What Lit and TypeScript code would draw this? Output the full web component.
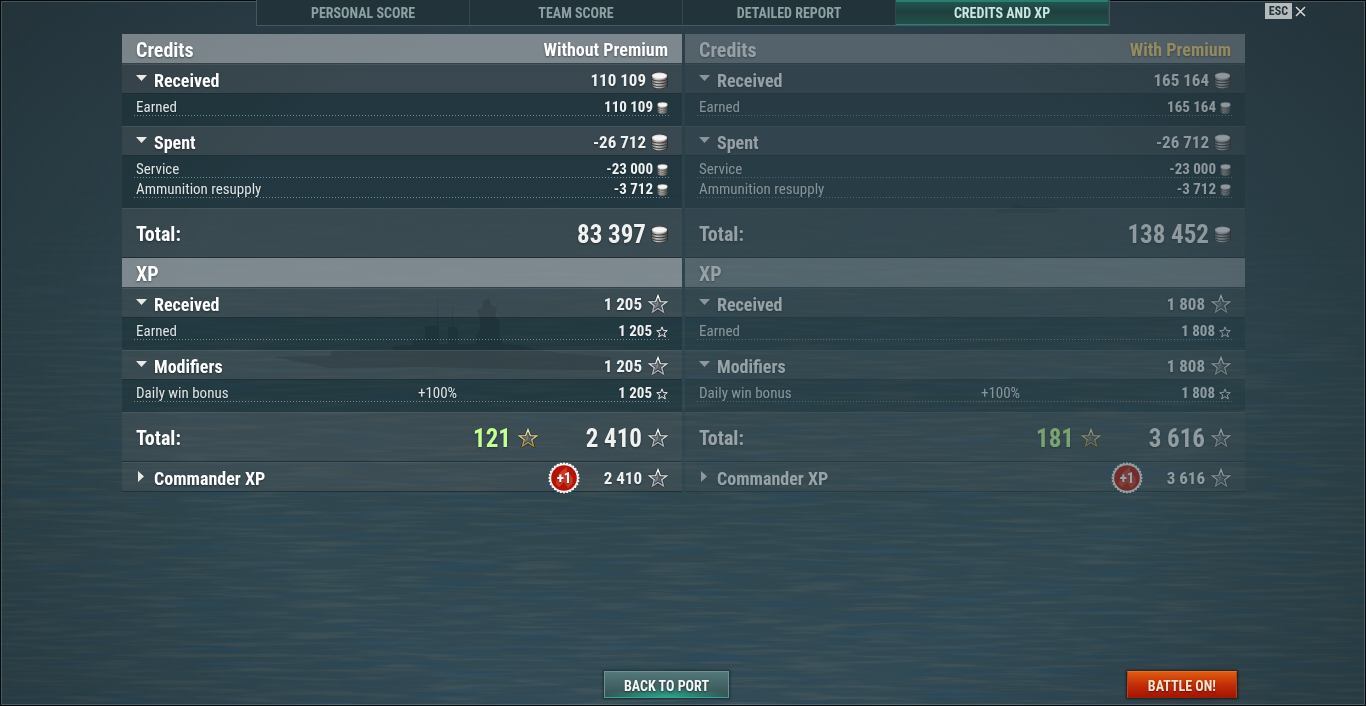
import { LitElement, html, css, svg, nothing } from "lit";
import { customElement, property, state } from "lit/decorators.js";

type Unit = "coin" | "star";

interface Line {
  label: string;
  value: string;
  rate?: string;
}

interface Section {
  label: string;
  value: string;
  lines: Line[];
  badge?: string;
}

interface Block {
  title: string;
  note?: string;
  unit: Unit;
  sections: Section[];
  total: string;
  bonus?: string;
  after?: Section;
}

const report = (
  note: string,
  c: string[],
  x: string[],
): Block[] => [
  {
    title: "Credits",
    note,
    unit: "coin",
    sections: [
      { label: "Received", value: c[0], lines: [{ label: "Earned", value: c[0] }] },
      {
        label: "Spent",
        value: "-26 712",
        lines: [
          { label: "Service", value: "-23 000" },
          { label: "Ammunition resupply", value: "-3 712" },
        ],
      },
    ],
    total: c[1],
  },
  {
    title: "XP",
    unit: "star",
    sections: [
      { label: "Received", value: x[0], lines: [{ label: "Earned", value: x[0] }] },
      {
        label: "Modifiers",
        value: x[0],
        lines: [{ label: "Daily win bonus", value: x[0], rate: "+100%" }],
      },
    ],
    total: x[1],
    bonus: x[2],
    after: { label: "Commander XP", value: x[1], lines: [], badge: "+1" },
  },
];

const STAR = "M10 1.5 12.3 7.6 18.8 7.8 13.7 11.8 15.6 18.2 10 14.5 4.4 18.2 6.3 11.8 1.2 7.8 7.7 7.6Z";
const CORE = "M10 5.5 11.4 9.2 15 9.2 12.3 11.3 13.5 15 10 12.9 6.5 15 7.7 11.3 5 9.2 8.6 9.2Z";

@customElement("value-icon")
export class ValueIcon extends LitElement {
  @property() kind: Unit | "gold" = "coin";
  @property({ type: Boolean, reflect: true }) small = false;

  static styles = css`
    :host {
      display: block;
      flex: none;
      line-height: 0;
    }
    .icon {
      display: block;
    }
  `;

  render() {
    if (this.kind === "coin") {
      const w = this.small ? 11 : 17;
      const h = this.small ? 12 : 17;
      return html`<svg class="icon" width=${w} height=${h} viewBox="0 0 17 17" preserveAspectRatio="none" aria-hidden="true">
        <defs>
          <linearGradient id="side">
            <stop offset="0" stop-color="#6c6c6c" />
            <stop offset="0.3" stop-color="#c4c4c2" />
            <stop offset="0.6" stop-color="#a5a3a1" />
            <stop offset="1" stop-color="#505050" />
          </linearGradient>
        </defs>
        <path d="M0 4C0 2 4 0 8.5 0S17 2 17 4V13C17 15.4 13 17 8.5 17S0.4 15.4 0.4 13Z" fill="#252b2d" />
        <path d="M0.8 5V13C0.8 14.9 4.3 16.4 8.5 16.4S16.2 14.9 16.2 13V5Z" fill="url(#side)" />
        <path d="M0.8 7.2C3.2 9.6 13.8 9.6 16.2 7.2M0.8 9.9C3.2 12.3 13.8 12.3 16.2 9.9M0.8 12.6C3.2 15 13.8 15 16.2 12.6" fill="none" stroke="#2a2a2a" stroke-width="0.9" />
        <ellipse cx="8.5" cy="3.8" rx="7.8" ry="3.4" fill="#d6d6d4" />
        <ellipse cx="8.5" cy="3.8" rx="6.4" ry="2.4" fill="#f6f5f3" />
      </svg>`;
    }
    if (this.small) {
      return html`<svg class="icon" width="12" height="12" viewBox="0 0 20 20" aria-hidden="true">
        <path d=${STAR} fill="#26363c" stroke="#f2f4f4" stroke-width="1.6" />
      </svg>`;
    }
    const gold = this.kind === "gold";
    return html`<svg class="icon" width="20" height="20" viewBox="0 0 20 20" aria-hidden="true">
      <defs>
        <linearGradient id="edge" x1="0" y1="0" x2="0" y2="1">
          <stop offset="0" stop-color=${gold ? "#f7ecc0" : "#ffffff"} />
          <stop offset="0.55" stop-color=${gold ? "#d9c27a" : "#d0d2d4"} />
          <stop offset="1" stop-color=${gold ? "#a88530" : "#a4a6a9"} />
        </linearGradient>
      </defs>
      <path d=${STAR} fill="#2b363b" stroke="#1c2629" stroke-width="2.8" opacity="0.7" />
      <path d=${STAR} fill="#303b40" stroke="url(#edge)" stroke-width="1.3" />
      <path d=${CORE} fill="#59646a" />
      <path d="M10 5.5V11L5 9.2H8.6ZM10 11 6.5 15 7.7 11.3Z" fill=${gold ? "#7f7f6a" : "#858d92"} />
    </svg>`;
  }
}

@customElement("result-panel")
export class ResultPanel extends LitElement {
  @property({ attribute: false }) blocks: Block[] = [];
  @property({ type: Boolean, reflect: true }) dimmed = false;
  @state() private closed = new Set<string>();

  static styles = css`
    :host {
      display: block;
      min-width: 0;
      color: #fff;
      text-shadow: 0 1px 2px rgba(10, 20, 24, 0.5);
    }
    :host([dimmed]) {
      opacity: 0.5;
    }
    .sheet {
      display: block;
      width: 100%;
    }
    .group {
      display: block;
    }
    .row {
      display: flex;
      align-items: center;
      box-sizing: border-box;
      padding: 2px 14px 0;
    }
    .label,
    .value,
    .extra,
    .rate {
      padding: 0;
      text-align: left;
      font-weight: inherit;
    }
    .label {
      flex: 1;
    }
    .value,
    .extra {
      display: flex;
      align-items: center;
      justify-content: flex-end;
      color: #f0f2f2;
    }
    .title {
      height: 30px;
      background: rgba(205, 208, 210, 0.5);
      border-bottom: 1px solid #33434a;
      font-size: 20px;
      font-weight: 700;
    }
    .note {
      padding: 0;
      font-size: 18px;
      text-align: right;
    }
    :host([dimmed]) .note {
      color: #ffdb80;
    }
    .section {
      height: 30px;
      background: rgba(100, 100, 100, 0.24);
      border-top: 1px solid rgba(160, 180, 186, 0.12);
      border-bottom: 1px solid rgba(17, 30, 36, 0.6);
      font-size: 18px;
      font-weight: 700;
    }
    .section .value {
      font-size: 17px;
    }
    .toggle {
      display: flex;
      align-items: center;
      gap: 7px;
      padding: 0;
      border: 0;
      background: none;
      color: inherit;
      font: inherit;
      text-shadow: inherit;
      cursor: pointer;
    }
    .arrow {
      width: 11px;
      height: 12px;
      margin-bottom: 4px;
    }
    .coin {
      gap: 5px;
    }
    .star {
      gap: 6px;
    }
    .details {
      display: block;
      padding: 2px 12px 10px;
      background: rgba(20, 42, 48, 0.4);
    }
    .line {
      height: 20px;
      padding: 3px 2px 0;
      font-size: 15px;
      line-height: 17px;
      color: #dfe4e4;
      background: repeating-linear-gradient(90deg, rgba(170, 190, 194, 0.6) 0 1px, transparent 1px 3px) bottom / 100% 1px no-repeat;
    }
    .rated .label {
      flex: 0 0 53%;
    }
    .rated .value {
      flex: 1;
    }
    .line .value {
      gap: 4px;
      font-weight: 700;
    }
    .sum {
      height: 50px;
      background: rgba(100, 100, 100, 0.24);
      border-top: 1px solid rgba(160, 180, 186, 0.12);
      border-bottom: 1px solid rgba(17, 30, 36, 0.6);
      font-size: 20px;
      font-weight: 700;
    }
    .sum .value,
    .sum .extra {
      font-size: 25px;
    }
    .sum .value {
      min-width: 130px;
    }
    .sum .extra {
      gap: 7px;
      color: #c3ff92;
    }
    .section .value.wide {
      min-width: 88px;
    }
    .badge {
      display: block;
      margin: -2px 0;
    }
    .plus {
      font-size: 15px;
      font-weight: 700;
      fill: #fff;
    }
  `;

  private flip(key: string) {
    const next = new Set(this.closed);
    if (!next.delete(key)) next.add(key);
    this.closed = next;
  }

  private seal(text: string) {
    const teeth = Array.from({ length: 28 }, (_, i) => {
      const a = (i / 28) * Math.PI * 2;
      return svg`<circle cx=${16 + Math.cos(a) * 14.2} cy=${16 + Math.sin(a) * 14.2} r="1.4" />`;
    });
    return html`<svg class="badge" width="32" height="32" viewBox="0 0 32 32" role="img" aria-label=${text}>
      <circle cx="16" cy="16.5" r="15.5" fill="#101c20" opacity="0.35" />
      <g fill="#f4f4f2"><circle cx="16" cy="16" r="14.2" />${teeth}</g>
      <circle cx="16" cy="16" r="12.8" fill="#b51305" />
      <path d="M8 22C8 16 10 12 16 7L19 5V10C24 13 26 17 24 22L20 26 16 20 11 25Z" fill="#d9462c" opacity="0.75" />
      <text class="plus" x="16" y="21" text-anchor="middle">${text}</text>
    </svg>`;
  }

  private section(block: Block, s: Section) {
    const key = `${block.title}/${s.label}`;
    const open = s.lines.length > 0 && !this.closed.has(key);
    return html`
      <tbody class="group">
        <tr class="row section">
          <th class="label" scope="row">
            <button class="toggle" aria-expanded=${open} @click=${() => this.flip(key)}>
              <svg class="arrow" viewBox="0 0 11 12" aria-hidden="true">
                <path d=${open ? "M0 3H11L5.5 9Z" : "M2 1V12L8 6.5Z"} fill="#e9e9e9" />
              </svg>
              ${s.label}
            </button>
          </th>
          ${s.badge ? html`<td class="extra">${this.seal(s.badge)}</td>` : nothing}
          <td class="value ${block.unit} ${s.badge ? "wide" : ""}">
            ${s.value}<value-icon .kind=${block.unit}></value-icon>
          </td>
        </tr>
      </tbody>
      ${open
        ? html`<tbody class="group details">
            ${s.lines.map(
              (l) => html`<tr class="row line ${l.rate ? "rated" : ""}">
                <th class="label" scope="row">${l.label}</th>
                ${l.rate ? html`<td class="rate">${l.rate}</td>` : nothing}
                <td class="value">
                  ${l.value}<value-icon .kind=${block.unit} small></value-icon>
                </td>
              </tr>`,
            )}
          </tbody>`
        : nothing}
    `;
  }

  render() {
    return html`<table class="sheet">
      ${this.blocks.map(
        (b) => html`
          <tbody class="group">
            <tr class="row title">
              <th class="label" scope="col">${b.title}</th>
              ${b.note ? html`<th class="note" scope="col">${b.note}</th>` : nothing}
            </tr>
          </tbody>
          ${b.sections.map((s) => this.section(b, s))}
          <tbody class="group">
            <tr class="row sum">
              <th class="label" scope="row">Total:</th>
              ${b.bonus
                ? html`<td class="extra">${b.bonus}<value-icon kind="gold"></value-icon></td>`
                : nothing}
              <td class="value ${b.unit}">${b.total}<value-icon .kind=${b.unit}></value-icon></td>
            </tr>
          </tbody>
          ${b.after ? this.section(b, b.after) : nothing}
        `,
      )}
    </table>`;
  }
}

@customElement("app-root")
export class AppRoot extends LitElement {
  @state() private tab = "Credits and XP";

  private tabs = ["Personal score", "Team score", "Detailed report", "Credits and XP"];
  private plain = report("Without Premium", ["110 109", "83 397"], ["1 205", "2 410", "121"]);
  private premium = report("With Premium", ["165 164", "138 452"], ["1 808", "3 616", "181"]);

  static styles = css`
    :host {
      display: block;
      font-family: "Liberation Sans Narrow", "Arial Narrow", "Roboto Condensed", "Liberation Sans", sans-serif;
    }
    .screen {
      position: relative;
      display: flex;
      flex-direction: column;
      box-sizing: border-box;
      min-height: 100vh;
      overflow: hidden;
      background: linear-gradient(#2c3e49, #2d434c 40%, #30474f 75%, #334b56);
    }
    .sea,
    .shade {
      position: absolute;
      inset: 0;
      width: 100%;
      height: 100%;
    }
    .shade {
      box-sizing: border-box;
      border: 1px solid #05090a;
      box-shadow: inset 0 0 0 1px rgba(150, 175, 180, 0.28);
      background: radial-gradient(ellipse 62% 85% at 50% 50%, transparent 60%, rgba(22, 32, 32, 0.6) 125%);
      pointer-events: none;
    }
    .top,
    .panels,
    .foot {
      position: relative;
    }
    .top {
      display: grid;
      grid-template-columns: 1fr auto 1fr;
      align-items: start;
    }
    .tabs {
      display: flex;
      grid-column: 2;
      height: 26px;
      box-sizing: border-box;
      border: solid rgba(130, 160, 162, 0.35);
      border-width: 0 1px 1px;
      background: #22343a;
    }
    .tab {
      width: 213px;
      padding: 1px 0 0;
      border: 0;
      border-right: 1px solid #34474c;
      background: none;
      color: #8ca1a2;
      font: 700 14px/24px "Liberation Sans Narrow", "Arial Narrow", "Roboto Condensed", "Liberation Sans", sans-serif;
      text-transform: uppercase;
      cursor: pointer;
    }
    .tab.on {
      color: #c9e6e0;
      background: linear-gradient(#1f5a53, #20403f 45%, #1f5149);
      box-shadow: inset 0 2px #2a7d70, inset 0 -1px #2a8072;
    }
    .close {
      display: flex;
      align-items: center;
      justify-self: end;
      gap: 3px;
      margin: 3px 60px 0 0;
      padding: 0;
      border: 0;
      background: none;
      cursor: pointer;
    }
    .key {
      padding: 0 4px;
      background: #b4bbbd;
      color: #243338;
      font: 700 12px/16px "Liberation Sans Narrow", "Arial Narrow", "Roboto Condensed", "Liberation Sans", sans-serif;
    }
    .panels {
      display: grid;
      grid-template-columns: 1fr 1fr;
      align-items: start;
      gap: 3px;
      padding: 8px 121px 16px 122px;
    }
    .foot {
      display: grid;
      grid-template-columns: 1fr auto 1fr;
      margin-top: auto;
      padding: 0 129px 8px 96px;
    }
    .action {
      box-sizing: border-box;
      height: 27px;
      padding: 2px 19px 0;
      font: 700 14px/24px "Liberation Sans Narrow", "Arial Narrow", "Roboto Condensed", "Liberation Sans", sans-serif;
      text-transform: uppercase;
      text-shadow: 0 1px 2px rgba(0, 0, 0, 0.5);
      cursor: pointer;
    }
    .back {
      grid-column: 2;
      border: 1px solid #6c9392;
      border-bottom-color: #35a58c;
      color: #f4fafa;
      background: radial-gradient(ellipse 52% 40% at 50% 100%, #25a98d, rgba(42, 140, 120, 0) 100%), linear-gradient(#53787a, #355154);
      box-shadow: 0 0 2px 1px rgba(10, 22, 26, 0.6);
    }
    .battle {
      justify-self: end;
      padding: 2px 20px 0;
      border: 1px solid;
      border-color: #e2712a #b04418 #8f2408;
      color: #ffe3cc;
      background: linear-gradient(#e35a0e, #c32f08 50%, #a81304);
      box-shadow: 0 0 2px 1px rgba(20, 12, 10, 0.7);
    }
  `;

  private sea() {
    return html`<svg class="sea" viewBox="0 0 1366 706" preserveAspectRatio="none" aria-hidden="true">
      <defs>
        <filter id="ripple" x="0" y="0" width="100%" height="100%" color-interpolation-filters="sRGB">
          <feTurbulence type="fractalNoise" baseFrequency="0.012 0.13" numOctaves="2" seed="7" />
          <feColorMatrix values="0 0 0 0 0.15  0 0 0 0 0.29  0 0 0 0 0.39  4 0 0 0 -2.1" />
        </filter>
        <filter id="glint" x="0" y="0" width="100%" height="100%" color-interpolation-filters="sRGB">
          <feTurbulence type="fractalNoise" baseFrequency="0.014 0.26" numOctaves="3" seed="23" />
          <feColorMatrix values="0 0 0 0 0.31  0 0 0 0 0.37  0 0 0 0 0.38  0 3 0 0 -1.3" />
        </filter>
        <linearGradient id="fade" x1="0" y1="0" x2="0" y2="1">
          <stop offset="0" stop-color="#000" />
          <stop offset="0.35" stop-color="#888" />
          <stop offset="1" stop-color="#fff" />
        </linearGradient>
        <mask id="depth"><rect y="190" width="1366" height="516" fill="url(#fade)" /></mask>
      </defs>
      <g mask="url(#depth)">
        <rect y="190" width="1366" height="516" filter="url(#glint)" opacity="0.5" />
        <rect y="190" width="1366" height="516" filter="url(#ripple)" opacity="0.5" />
      </g>
      <g fill="#1e3036" opacity="0.6">
        <path d="M274 357 330 356 332 351 392 350 394 346 413 345V340H425V326H439V344H448V327H458V344H476V335L480 330V318L477 310 482 308 484 300 489 298 491 305 497 308 495 316 500 322 499 336 503 344 520 346 540 350 560 353 612 357 606 370 560 370 420 367 330 368Z" opacity="0.8" />
        <path d="M437 300H438V328H437ZM452 305H453V328H452Z" opacity="0.6" />
        <path d="M994 210 1012 208 1016 204 1024 207 1050 207 1060 209 1054 213H1000Z" opacity="0.4" />
      </g>
    </svg>`;
  }

  render() {
    return html`<div class="screen">
      ${this.sea()}
      <div class="shade"></div>
      <header class="top">
        <nav class="tabs" role="tablist">
          ${this.tabs.map(
            (t) => html`<button
              class="tab ${t === this.tab ? "on" : ""}"
              role="tab"
              aria-selected=${t === this.tab}
              @click=${() => (this.tab = t)}
            >${t}</button>`,
          )}
        </nav>
        <button class="close" aria-label="Close, ESC">
          <span class="key">ESC</span>
          <svg width="11" height="11" viewBox="0 0 11 11" aria-hidden="true">
            <path d="M1 1 10 10M10 1 1 10" stroke="#1b282c" stroke-width="3" />
            <path d="M1 1 10 10M10 1 1 10" stroke="#d0d5d6" stroke-width="1.7" />
          </svg>
        </button>
      </header>
      <main class="panels">
        <result-panel .blocks=${this.plain}></result-panel>
        <result-panel .blocks=${this.premium} dimmed></result-panel>
      </main>
      <footer class="foot">
        <button class="action back">Back to port</button>
        <button class="action battle">Battle on!</button>
      </footer>
    </div>`;
  }
}
